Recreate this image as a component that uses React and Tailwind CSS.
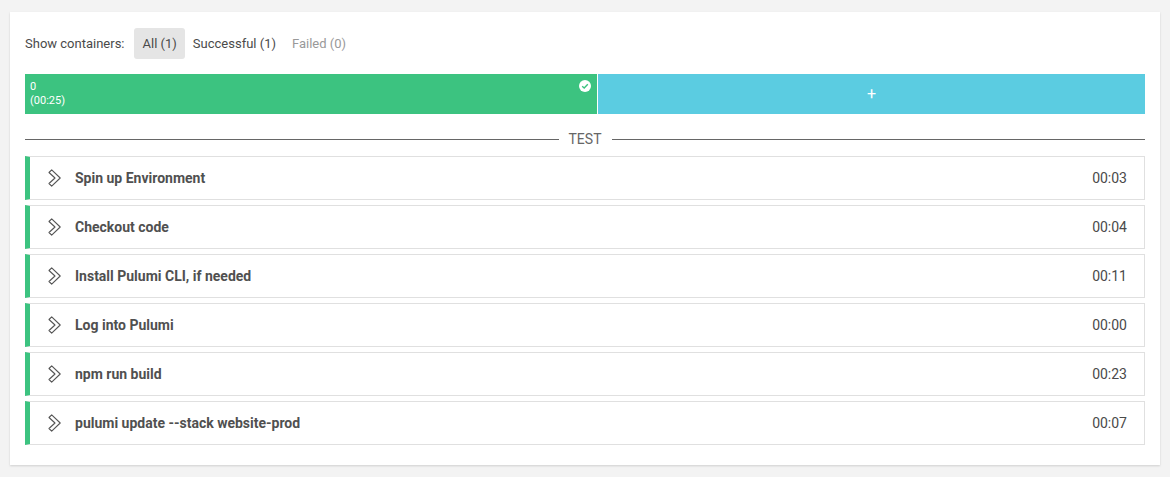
const steps = [
  ["Spin up Environment", "00:03"],
  ["Checkout code", "00:04"],
  ["Install Pulumi CLI, if needed", "00:11"],
  ["Log into Pulumi", "00:00"],
  ["npm run build", "00:23"],
  ["pulumi update --stack website-prod", "00:07"],
];

function Chevron() {
  return (
    <svg width="15" height="18" viewBox="0 0 15 18" fill="none" className="block">
      <path d="M2 3.5 L4.7 0.8 L13.2 9 L4.7 17.2 L2 14.5 L8 9 Z" stroke="#555" strokeWidth="1.1" strokeLinejoin="round" />
    </svg>
  );
}

export default function App() {
  return (
    <div className="w-[1170px] h-[477px] bg-[#f3f3f3] pt-3 px-[10px] overflow-hidden" style={{ fontFamily: "Roboto, sans-serif" }}>
      <div className="bg-white h-[453px] shadow-[0_1px_2px_rgba(0,0,0,0.15)] px-[15px] pt-4">
        <div className="flex items-center h-[31px] text-[13px] text-[#4a4a4a]">
          <span className="mr-[9px]">Show containers:</span>
          <span className="h-[31px] pl-[9px] pr-2 rounded-[3px] bg-[#e5e5e5] flex items-center">All (1)</span>
          <span className="px-2">Successful (1)</span>
          <span className="px-2 text-[#999]">Failed (0)</span>
        </div>
        <div className="flex h-10 mt-[15px] text-white">
          <div className="w-[572px] bg-[#3cc380] relative pl-[5px] pt-[6px] text-[11px] leading-[14px]">
            <div>0</div>
            <div>(00:25)</div>
            <svg className="absolute right-[6px] top-[6px]" width="12" height="12" viewBox="0 0 12 12">
              <circle cx="6" cy="6" r="6" fill="#fff" />
              <path d="M3.2 6.2 L5.2 8 L8.8 4.2" stroke="#3cc380" strokeWidth="1.4" fill="none" />
            </svg>
          </div>
          <div className="flex-1 ml-px bg-[#5bcce1] flex items-center justify-center text-[16px]">+</div>
        </div>
        <div className="flex items-center h-4 mt-[17px] text-[14px] text-[#666]">
          <div className="flex-1 h-px bg-[#666]" />
          <span className="px-[10px]">TEST</span>
          <div className="flex-1 h-px bg-[#666]" />
        </div>
        <div className="mt-[9px] flex flex-col gap-[5px]">
          {steps.map(([name, time]) => (
            <div key={name} className="h-11 flex items-center border border-[#e0e0e0] border-l-[5px] border-l-[#3cc380] text-[14px] text-[#4a4a4a]">
              <span className="ml-[17px] mr-[13px]"><Chevron /></span>
              <span className="font-bold flex-1 text-[#505050]">{name}</span>
              <span className="mr-[17px]">{time}</span>
            </div>
          ))}
        </div>
      </div>
    </div>
  );
}
